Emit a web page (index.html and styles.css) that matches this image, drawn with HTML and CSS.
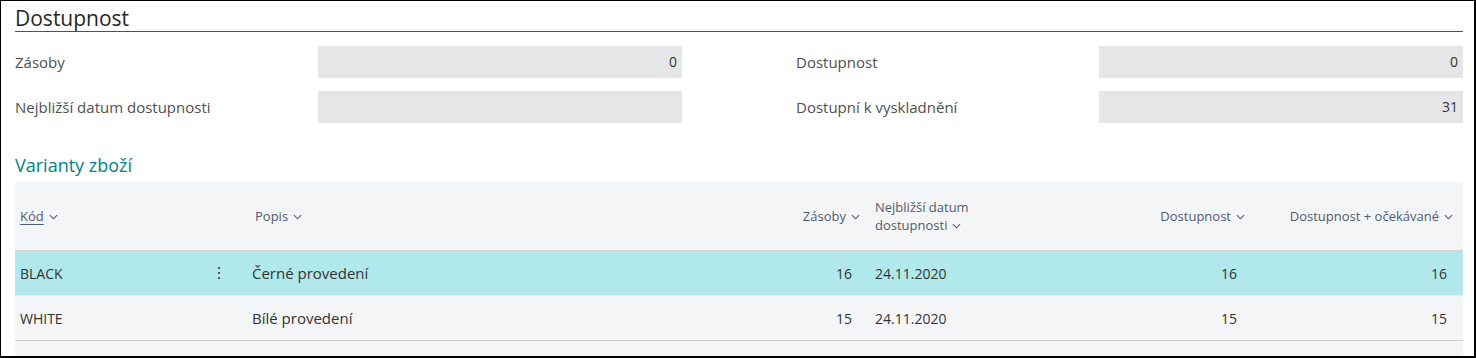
FILE: index.html
```html
<!DOCTYPE html>
<html lang="cs">
<head>
    <meta charset="UTF-8">
    <title>Dostupnost</title>
    <link rel="stylesheet" href="styles.css">
</head>
<body>
    <div class="frame">
        <h2 class="title">Dostupnost</h2>

        <div class="fields">
            <div class="field">
                <span class="label">Zásoby</span>
                <span class="box">0</span>
            </div>
            <div class="field">
                <span class="label">Dostupnost</span>
                <span class="box">0</span>
            </div>
            <div class="field">
                <span class="label">Nejbližší datum dostupnosti</span>
                <span class="box"></span>
            </div>
            <div class="field">
                <span class="label">Dostupní k vyskladnění</span>
                <span class="box">31</span>
            </div>
        </div>

        <h3 class="part-title">Varianty zboží</h3>

        <div class="grid-wrap">
            <table class="grid">
                <colgroup>
                    <col class="c-code">
                    <col class="c-menu">
                    <col class="c-desc">
                    <col class="c-inv">
                    <col class="c-date">
                    <col class="c-avail">
                    <col class="c-exp">
                </colgroup>
                <thead>
                    <tr>
                        <th class="left"><span class="sorted">Kód</span><svg class="chev" viewBox="0 0 10 6"><path d="M1 1l4 4 4-4"/></svg></th>
                        <th></th>
                        <th class="left desc">Popis<svg class="chev" viewBox="0 0 10 6"><path d="M1 1l4 4 4-4"/></svg></th>
                        <th class="right inv">Zásoby<svg class="chev" viewBox="0 0 10 6"><path d="M1 1l4 4 4-4"/></svg></th>
                        <th class="left date">Nejbližší datum<br>dostupnosti<svg class="chev" viewBox="0 0 10 6"><path d="M1 1l4 4 4-4"/></svg></th>
                        <th class="right avail">Dostupnost<svg class="chev" viewBox="0 0 10 6"><path d="M1 1l4 4 4-4"/></svg></th>
                        <th class="right exp">Dostupnost + očekávané<svg class="chev" viewBox="0 0 10 6"><path d="M1 1l4 4 4-4"/></svg></th>
                    </tr>
                </thead>
                <tbody>
                    <tr class="selected">
                        <td class="left">BLACK</td>
                        <td class="menu">
                            <svg class="dots" viewBox="0 0 4 14"><circle cx="2" cy="2" r="1.1"/><circle cx="2" cy="7" r="1.1"/><circle cx="2" cy="12" r="1.1"/></svg>
                        </td>
                        <td class="left desc">Černé provedení</td>
                        <td class="right inv">16</td>
                        <td class="left date">24.11.2020</td>
                        <td class="right avail">16</td>
                        <td class="right exp">16</td>
                    </tr>
                    <tr>
                        <td class="left">WHITE</td>
                        <td class="menu"></td>
                        <td class="left desc">Bílé provedení</td>
                        <td class="right inv">15</td>
                        <td class="left date">24.11.2020</td>
                        <td class="right avail">15</td>
                        <td class="right exp">15</td>
                    </tr>
                </tbody>
            </table>
        </div>
    </div>
</body>
</html>
```

FILE: styles.css
```css
:root {
    --text: #333333;
    --label: #505050;
    --head: #505c6d;
    --teal: #00838a;
    --field-bg: #e5e6e8;
    --grid-bg: #f4f5f7;
    --selected: #b1e8eb;
}

body {
    margin: 0;
    background: #ffffff;
    font-family: 'Open Sans', 'Noto Sans', sans-serif;
    color: var(--text);
}

.frame {
    width: 1476px;
    height: 358px;
    box-sizing: border-box;
    border: 1px solid #000;
    border-right-width: 2px;
    border-bottom-width: 2px;
    padding: 0 11px 0 14px;
    display: flex;
    flex-direction: column;
    overflow: hidden;
}

.title {
    margin: 0;
    padding-top: 4px;
    height: 26px;
    font-size: 21px;
    font-weight: 400;
    line-height: 26px;
    color: #262626;
    border-bottom: 1px solid #4b5261;
}

.fields {
    display: grid;
    grid-template-columns: 1fr 1fr;
    column-gap: 114px;
    row-gap: 13px;
    margin-top: 14px;
}

.field {
    display: grid;
    grid-template-columns: 303px 1fr;
    align-items: center;
    height: 32px;
}

.label {
    font-size: 15px;
    color: var(--label);
}

.box {
    height: 32px;
    line-height: 32px;
    background: var(--field-bg);
    text-align: right;
    padding-right: 5px;
    font-size: 14px;
    color: var(--text);
}

.part-title {
    margin: 28px 0 0;
    height: 31px;
    font-size: 18px;
    font-weight: 400;
    line-height: 28px;
    color: var(--teal);
}

.grid-wrap {
    flex: 1;
    background: var(--grid-bg);
}

.grid {
    width: 100%;
    table-layout: fixed;
    border-collapse: collapse;
}

.c-code { width: 185px; }
.c-menu { width: 40px; }
.c-desc { width: 545px; }
.c-inv { width: 80px; }
.c-date { width: 185px; }
.c-avail { width: 200px; }
.c-exp { width: 213px; }

.grid th {
    height: 68px;
    padding: 0 5px;
    font-size: 13px;
    font-weight: 400;
    line-height: 18px;
    color: var(--head);
    border-bottom: 1px solid #d4d4d4;
    white-space: nowrap;
}

.grid td {
    height: 44px;
    padding: 0 5px;
    font-size: 14px;
    color: var(--text);
    border-bottom: 1px solid #ececee;
    white-space: nowrap;
}

.grid td.desc {
    font-size: 15px;
}

.grid tbody tr:last-child td {
    border-bottom-color: #cfcfcf;
}

.grid tr.selected td {
    background: var(--selected);
}

.left { text-align: left; }
.right { text-align: right; }

.grid .desc { padding-left: 12px; }
.grid th.desc { padding-left: 15px; }
.grid .date { padding-left: 10px; }
.grid td.inv, .grid td.avail { padding-right: 13px; }
.grid td.exp { padding-right: 16px; }
.grid th.exp { padding-right: 10px; }

.sorted {
    text-decoration: underline;
    text-underline-offset: 3px;
}

.chev {
    width: 9px;
    height: 6px;
    margin-left: 5px;
    vertical-align: 1px;
    fill: none;
    stroke: var(--head);
    stroke-width: 1.2;
}

.menu {
    text-align: center;
}

.dots {
    width: 4px;
    height: 14px;
    display: block;
    margin: 0 auto 0 12px;
    fill: #333;
}
```
